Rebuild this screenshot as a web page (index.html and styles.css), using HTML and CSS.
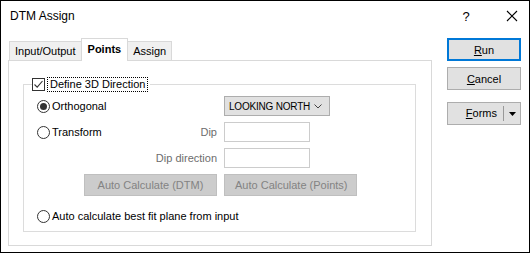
FILE: index.html
```html
<!DOCTYPE html>
<html lang="en">
<head>
<meta charset="UTF-8">
<title>DTM Assign</title>
<link rel="stylesheet" href="styles.css">
</head>
<body>
<div class="window">
    <div class="titlebar">
        <span class="title">DTM Assign</span>
        <span class="title-btn help">?</span>
        <span class="title-btn close">
            <svg width="12" height="12" viewBox="0 0 12 12"><path d="M1 1 L11 11 M11 1 L1 11" stroke="#000" stroke-width="1.1" fill="none"/></svg>
        </span>
    </div>
    <div class="content">
        <div class="tab-area">
            <div class="tabs">
                <div class="tab">Input/Output</div>
                <div class="tab active">Points</div>
                <div class="tab">Assign</div>
            </div>
            <div class="tab-page">
                <fieldset class="group">
                    <legend>
                        <span class="check checked">
                            <svg width="11" height="11" viewBox="0 0 11 11"><path d="M1.5 5.5 L4.2 8.2 L9.5 2" stroke="#333" stroke-width="1.1" fill="none"/></svg>
                        </span>
                        <span class="focus">Define 3D Direction</span>
                    </legend>
                    <div class="grid">
                        <label class="radio-row"><span class="radio on"></span>Orthogonal</label>
                        <span></span>
                        <div class="select">
                            <span class="select-text">LOOKING NORTH</span>
                            <svg width="8" height="5" viewBox="0 0 8 5"><path d="M0.5 0.5 L4 4 L7.5 0.5" stroke="#444" stroke-width="1" fill="none"/></svg>
                        </div>

                        <label class="radio-row"><span class="radio"></span>Transform</label>
                        <span class="field-label">Dip</span>
                        <div class="textbox"></div>

                        <span></span>
                        <span class="field-label">Dip direction</span>
                        <div class="textbox"></div>

                        <div class="btn-cell"><button class="btn disabled">Auto Calculate (DTM)</button></div>
                        <div><button class="btn disabled">Auto Calculate (Points)</button></div>

                        <label class="radio-row wide"><span class="radio"></span>Auto calculate best fit plane from input</label>
                    </div>
                </fieldset>
            </div>
        </div>
        <div class="side">
            <button class="btn side-btn default"><u>R</u>un</button>
            <button class="btn side-btn"><u>C</u>ancel</button>
            <div class="btn side-btn split">
                <span class="split-text"><u>F</u>orms</span>
                <span class="split-arrow">
                    <svg width="7" height="4" viewBox="0 0 7 4"><path d="M0 0 L7 0 L3.5 4 Z" fill="#000"/></svg>
                </span>
            </div>
        </div>
    </div>
</div>
</body>
</html>
```
FILE: styles.css
```css
body {
    margin: 0;
    font-family: "Liberation Sans", Arial, sans-serif;
    font-size: 11px;
    color: #000;
    background: #fff;
}
.window {
    width: 530px;
    height: 253px;
    box-sizing: border-box;
    border: 1px solid #000;
    background: #fff;
}
.titlebar {
    height: 30px;
    display: flex;
    align-items: center;
}
.title {
    margin-left: 9px;
    flex: 1;
    font-size: 12px;
}
.title-btn {
    width: 46px;
    text-align: center;
}
.help {
    font-size: 13px;
    margin-right: 0;
}
.close {
    display: flex;
    justify-content: center;
    margin-right: -6px;
}
.content {
    display: flex;
    margin-top: 7px;
}
.tab-area {
    margin-left: 7px;
    width: 424px;
}
.tabs {
    display: flex;
    align-items: flex-end;
    height: 22px;
    padding-left: 1px;
}
.tab {
    height: 18px;
    line-height: 18px;
    padding: 0 5px;
    border: 1px solid #d9d9d9;
    border-bottom: none;
    background: #f0f0f0;
    margin-right: -1px;
}
.tab.active {
    height: 22px;
    line-height: 20px;
    font-weight: bold;
    background: #fff;
    position: relative;
    z-index: 1;
    margin-bottom: -1px;
    padding: 0 6px;
}
.tab-page {
    border: 1px solid #d9d9d9;
    height: 186px;
    box-sizing: border-box;
    padding: 16px 15px 0 14px;
}
.group {
    margin: 0;
    border: 1px solid #dcdcdc;
    padding: 5px 0 5px 13px;
    min-width: 0;
}
.group legend {
    display: flex;
    align-items: center;
    padding: 0 3px 0 0;
    margin-left: -5px;
    height: 14px;
}
.check {
    width: 13px;
    height: 13px;
    box-sizing: border-box;
    border: 1px solid #333;
    display: flex;
    align-items: center;
    justify-content: center;
    margin-right: 3px;
    background: #fff;
}
.focus {
    outline: 1px dotted #000;
    padding: 0 2px;
    line-height: 13px;
}
.grid {
    display: grid;
    grid-template-columns: 100px 87px 1fr;
    grid-template-rows: 20px 20px 20px 22px 24px;
    row-gap: 6px;
}
.radio-row {
    display: flex;
    align-items: center;
    white-space: nowrap;
}
.radio-row.wide {
    grid-column: 1 / 4;
    margin-top: 4px;
}
.radio {
    width: 13px;
    height: 13px;
    box-sizing: border-box;
    border: 1px solid #333;
    border-radius: 50%;
    margin-right: 2px;
    display: flex;
    align-items: center;
    justify-content: center;
}
.radio.on::after {
    content: "";
    width: 7px;
    height: 7px;
    border-radius: 50%;
    background: #333;
}
.field-label {
    color: #6d6d6d;
    text-align: right;
    padding-right: 7px;
    line-height: 20px;
    white-space: nowrap;
}
.select {
    width: 106px;
    height: 20px;
    box-sizing: border-box;
    background: #e1e1e1;
    border: 1px solid #adadad;
    display: flex;
    align-items: center;
    justify-content: space-between;
    padding: 0 7px 0 4px;
    white-space: nowrap;
}
.select-text {
    font-size: 10px;
    letter-spacing: -0.2px;
}
.textbox {
    width: 86px;
    height: 20px;
    box-sizing: border-box;
    border: 1px solid #cccccc;
    background: #fff;
}
.btn-cell {
    grid-column: 1 / 3;
    display: flex;
    justify-content: flex-end;
    padding-right: 7px;
}
.btn {
    font-family: "Liberation Sans", Arial, sans-serif;
    font-size: 11px;
    height: 22px;
    border: 1px solid #adadad;
    background: #e1e1e1;
    color: #000;
    padding: 0 10px;
    margin: 0;
    white-space: nowrap;
}
.btn.disabled {
    background: #cccccc;
    border-color: #bfbfbf;
    color: #838383;
    width: 133px;
}
.side {
    display: flex;
    flex-direction: column;
    margin-left: 15px;
}
.side-btn {
    width: 74px;
    height: 23px;
    box-sizing: border-box;
}
.side-btn.default {
    border: 2px solid #0078d7;
}
.side-btn + .side-btn {
    margin-top: 6px;
}
.split {
    margin-top: 12px !important;
    display: flex;
    align-items: center;
    padding: 0;
}
.split-text {
    flex: 1;
    text-align: right;
    padding-right: 6px;
    border-right: 1px solid #999;
    line-height: 15px;
}
.split-arrow {
    width: 16px;
    display: flex;
    justify-content: center;
}
```
